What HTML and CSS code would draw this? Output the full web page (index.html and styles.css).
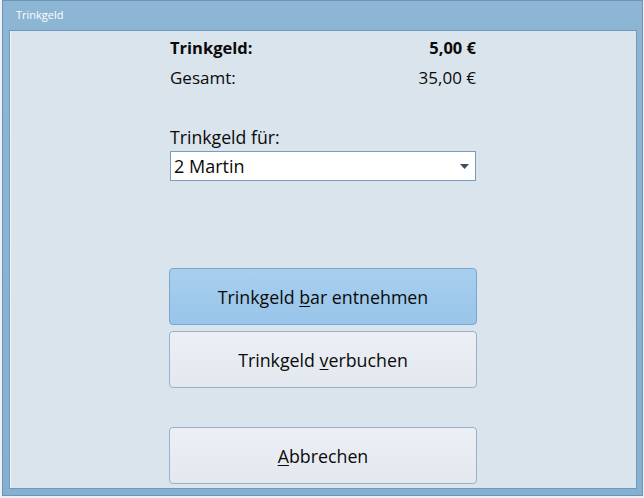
FILE: index.html
```html
<!DOCTYPE html>
<html lang="de">
<head>
<meta charset="utf-8">
<title>Trinkgeld</title>
<link rel="stylesheet" href="styles.css">
</head>
<body>
<div class="window">
  <div class="titlebar">Trinkgeld</div>
  <div class="client">
    <div class="column">
      <div class="row strong"><span>Trinkgeld:</span><span>5,00 €</span></div>
      <div class="row total"><span>Gesamt:</span><span>35,00 €</span></div>
      <div class="label">Trinkgeld für:</div>
      <div class="select">
        <span>2 Martin</span>
        <svg class="arrow" width="9" height="5" viewBox="0 0 9 5"><path d="M0 0H9L4.5 5Z" fill="#3b4d66"/></svg>
      </div>
      <div class="btn primary first"><span>Trinkgeld <u>b</u>ar entnehmen</span></div>
      <div class="btn second"><span>Trinkgeld <u>v</u>erbuchen</span></div>
      <div class="btn cancel"><span><u>A</u>bbrechen</span></div>
    </div>
  </div>
</div>
</body>
</html>
```
FILE: styles.css
```css
html, body {
  margin: 0;
  padding: 0;
  background: #eef1f4;
}
body {
  font-family: "Open Sans", "Noto Sans", sans-serif;
  color: #0a0a0a;
}
.window {
  box-sizing: border-box;
  margin-left: 2px;
  width: 641px;
  height: 496px;
  background: linear-gradient(#8db6d4, #85b0d0);
  border: 1px solid #6a95b9;
  padding: 0 5px 6px 6px;
  display: flex;
  flex-direction: column;
}
.titlebar {
  height: 29px;
  flex: none;
  box-sizing: border-box;
  padding: 6px 0 0 7px;
  font-size: 11px;
  color: #ffffff;
  line-height: 16px;
}
.client {
  flex: 1;
  background: #dae4ed;
  border: 1px solid #6f99bc;
  box-shadow: inset 1px 0 0 #f3f6f9;
  display: flex;
  justify-content: center;
}
.column {
  width: 306px;
  padding-top: 2px;
  display: flex;
  flex-direction: column;
}
.row {
  display: flex;
  justify-content: space-between;
  font-size: 17px;
  line-height: 30px;
}
.row.strong {
  font-weight: 700;
  font-size: 16.5px;
}
.row.total {
  line-height: 29px;
}
.label {
  margin-top: 33px;
  font-size: 17.7px;
  line-height: 24px;
}
.select {
  margin-top: 2px;
  height: 30px;
  box-sizing: border-box;
  background: #ffffff;
  border: 1px solid #7c9bbb;
  display: flex;
  align-items: center;
  justify-content: space-between;
  padding: 0 6px 0 3px;
  font-size: 18px;
}
.arrow {
  display: block;
}
.btn {
  box-sizing: border-box;
  height: 57px;
  margin: 0 -1px;
  border-radius: 4px;
  display: flex;
  align-items: center;
  justify-content: center;
  font-size: 17.8px;
  background: linear-gradient(#ecf0f5, #e3e8ef);
  border: 1px solid #9cb0c9;
}
.btn u {
  text-underline-offset: 2px;
}
.btn.primary {
  background: linear-gradient(#a8cfee, #98c5e9);
  border-color: #78a6d0;
}
.btn.first {
  margin-top: 87px;
}
.btn.second {
  margin-top: 6px;
}
.btn.cancel {
  margin-top: 39px;
}
```
